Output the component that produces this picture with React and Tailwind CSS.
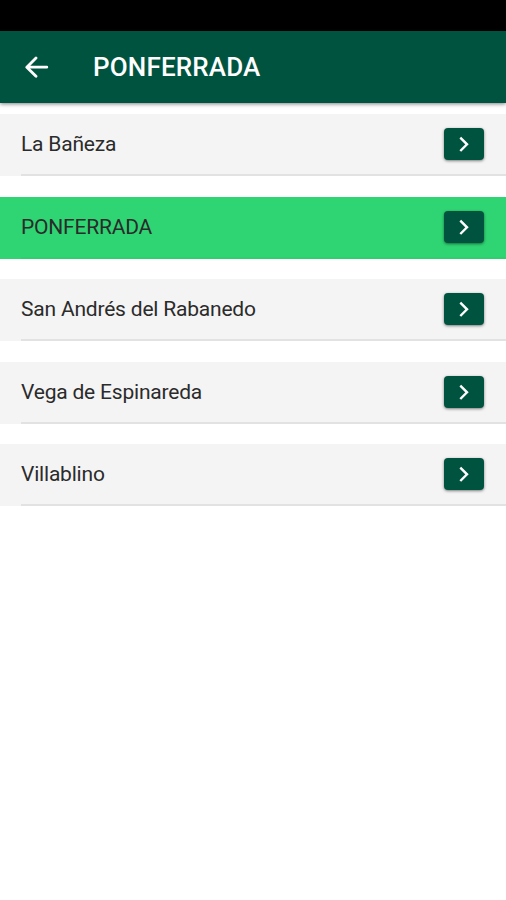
const places = [
  { id: 1, name: 'La Bañeza' },
  { id: 2, name: 'PONFERRADA' },
  { id: 3, name: 'San Andrés del Rabanedo' },
  { id: 4, name: 'Vega de Espinareda' },
  { id: 5, name: 'Villablino' },
]

function BackIcon() {
  return (
    <svg width="24" height="22" viewBox="0 0 24 22" fill="none" stroke="currentColor" strokeWidth="2.8" strokeLinecap="round" strokeLinejoin="round">
      <path d="M11 1.9L1.8 11.2l9.2 9.1M2.2 11.2h19.6" />
    </svg>
  )
}

function ChevronIcon() {
  return (
    <svg width="11" height="16" viewBox="0 0 11 16" fill="none" stroke="currentColor" strokeWidth="2.4">
      <path d="M1.3 1.6L8 8.3l-6.7 6.7" />
    </svg>
  )
}

function PlaceRow({ name, active }) {
  return (
    <li className={`flex h-[62px] pl-[21px] ${active ? 'bg-[#2fd573]' : 'bg-[#f4f4f4]'}`}>
      <div className={`flex flex-1 items-center justify-between border-b-2 pr-[22px] ${active ? 'border-[#2dcf6f]' : 'border-[#e2e2e2]'}`}>
        <span className="text-[21px] leading-7 tracking-[-0.2px] text-[#2b2b2b]">{name}</span>
        <button
          aria-label={name}
          className="flex h-[32px] w-[40px] items-center justify-center rounded-[4px] bg-[#00543f] text-white shadow-[0_1px_3px_rgba(0,0,0,0.5)]"
        >
          <ChevronIcon />
        </button>
      </div>
    </li>
  )
}

export default function App() {
  const selected = 2

  return (
    <div className="min-h-screen bg-white font-['Roboto',sans-serif]">
      {/* Status bar */}
      <div className="h-[31px] bg-black" />

      <header className="flex h-[72px] items-center bg-[#00543f] pl-[25px] text-white shadow-[0_1px_4px_rgba(0,0,0,0.5)]">
        <button aria-label="Volver">
          <BackIcon />
        </button>
        <h1 className="ml-[44px] text-[26px] font-medium leading-8 tracking-[0.16px]">PONFERRADA</h1>
      </header>

      <ul className="flex flex-col gap-[20.5px] pt-[11px]">
        {places.map((place) => (
          <PlaceRow key={place.id} name={place.name} active={place.id === selected} />
        ))}
      </ul>
    </div>
  )
}
